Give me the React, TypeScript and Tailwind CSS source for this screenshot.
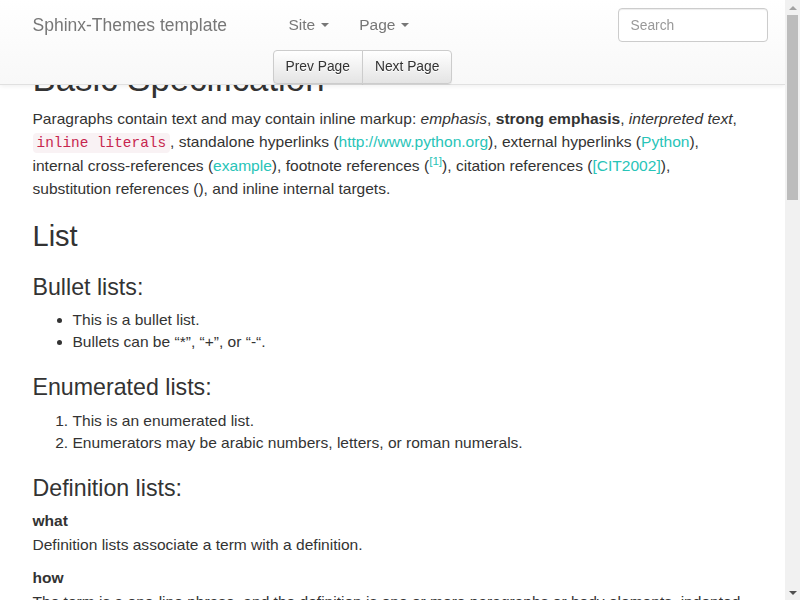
const link = "text-[#28c4b8] no-underline";

function Caret() {
  return (
    <span className="ml-[6px] inline-block h-0 w-0 border-x-[4px] border-t-[4px] border-x-transparent border-t-[#777] align-middle" />
  );
}

function Navbar() {
  return (
    <div className="fixed left-0 right-[15px] top-0 z-10 border-b border-[#e0e0e0] bg-gradient-to-b from-white to-[#f8f8f8] shadow-[0_1px_5px_rgba(0,0,0,0.075)]">
      <div className="mx-auto flex w-[750px] px-[15px]">
        <div className="flex h-[50px] w-[241px] shrink-0 items-center text-[17.5px] leading-[20px] text-[#777]">
          Sphinx-Themes template
        </div>
        <div className="flex flex-col">
          <div className="flex">
            <a className="flex h-[50px] items-center px-[15px] text-[15.5px] text-[#777]">
              Site
              <Caret />
            </a>
            <a className="flex h-[50px] items-center px-[15px] text-[15.5px] text-[#777]">
              Page
              <Caret />
            </a>
          </div>
          <div className="-ml-px flex">
            <button className="h-[34px] rounded-l-[4px] border border-[#ccc] bg-gradient-to-b from-white to-[#e4e4e4] px-[12px] text-[13.8px] leading-[20px] text-[#333] shadow-[0_1px_1px_rgba(0,0,0,0.075)] [text-shadow:0_1px_0_#fff]">
              Prev Page
            </button>
            <button className="-ml-px h-[34px] rounded-r-[4px] border border-[#ccc] bg-gradient-to-b from-white to-[#e4e4e4] px-[12px] text-[13.8px] leading-[20px] text-[#333] shadow-[0_1px_1px_rgba(0,0,0,0.075)] [text-shadow:0_1px_0_#fff]">
              Next Page
            </button>
          </div>
        </div>
        <div className="ml-auto mr-[-15px] pt-[8px]">
          <input
            placeholder="Search"
            className="h-[34px] w-[150px] rounded-[4px] border border-[#ccc] bg-white px-[12px] text-[13.8px] text-[#555] shadow-[inset_0_1px_1px_rgba(0,0,0,0.075)] outline-none placeholder:text-[#999]"
          />
        </div>
      </div>
    </div>
  );
}

// the window scrollbar of the page, drawn since the headless browser hides it
function Scrollbar() {
  return (
    <div className="fixed bottom-0 right-0 top-0 z-20 flex w-[15px] flex-col items-center bg-[#f1f1f1]">
      <div className="flex h-[15px] items-center justify-center">
        <span className="h-0 w-0 border-x-[4px] border-b-[4px] border-x-transparent border-b-[#a3a3a3]" />
      </div>
      <div className="h-[185px] w-[11px] bg-[#bcbcbc]" />
      <div className="flex-1" />
      <div className="flex h-[15px] items-center justify-center">
        <span className="h-0 w-0 border-x-[4px] border-t-[4px] border-x-transparent border-t-[#505050]" />
      </div>
    </div>
  );
}

const h2 = "mt-[20px] mb-[10px] text-[29px] leading-[1.1] font-normal";
const h3 = "mt-[22px] mb-[9px] text-[23.2px] leading-[1.1] font-normal";
const list = "mb-[10px] pl-[40px] leading-[22px]";

export default function App() {
  return (
    <div className="mr-[15px] min-h-[1848px] bg-white font-['Liberation_Sans',Arial,sans-serif] text-[15.55px] leading-[22.86px] text-[#333]">
      <Navbar />
      <Scrollbar />
      <div className="mx-auto w-[750px] px-[15px] pt-[60px]">
        <h1 className="mb-[10px] text-[34.8px] leading-[1.1] font-normal">Basic Specification</h1>
        <p className="mb-[10px]">
          Paragraphs contain text and may contain inline markup: <em>emphasis</em>,{" "}
          <strong>strong emphasis</strong>, <em>interpreted text</em>,{" "}
          <code className="rounded-[4px] bg-[#f9f2f4] px-[4px] py-[2px] font-['Liberation_Mono','Courier_New',monospace] text-[14.4px] text-[#c7254e]">
            inline literals
          </code>
          , standalone hyperlinks (<a className={link}>http://www.python.org</a>), external hyperlinks (
          <a className={link}>Python</a>), internal cross-references (<a className={link}>example</a>), footnote
          references (
          <sup className="relative top-[-0.5em] align-baseline text-[75%] leading-none">
            <a className={link}>[1]</a>
          </sup>
          ), citation references (<a className={link}>[CIT2002]</a>), substitution references (), and inline
          internal targets.
        </p>

        <h2 className={h2}>List</h2>
        <h3 className={h3}>Bullet lists:</h3>
        <ul className={`${list} list-disc`}>
          <li>This is a bullet list.</li>
          <li>Bullets can be “*”, “+”, or “-“.</li>
        </ul>

        <h3 className={h3}>Enumerated lists:</h3>
        <ol className={`${list} list-decimal`}>
          <li>This is an enumerated list.</li>
          <li>Enumerators may be arabic numbers, letters, or roman numerals.</li>
        </ol>

        <h3 className={h3}>Definition lists:</h3>
        <dl className="mb-[20px] leading-[22px]">
          <dt className="font-bold">what</dt>
          <dd>
            <p className="mb-[11px] pt-[2px]">Definition lists associate a term with a definition.</p>
          </dd>
          <dt className="font-bold">how</dt>
          <dd>
            <p className="mb-[11px] pt-[2px]">
              The term is a one-line phrase, and the definition is one or more paragraphs or body elements, indented
              relative to the term. Blank lines are not allowed between term and definition.
            </p>
          </dd>
        </dl>

        <h3 className={h3}>Field lists:</h3>
        <dl className="mb-[20px] leading-[22px]">
          <dt className="font-bold">Authors:</dt>
          <dd>
            <p className="mb-[10px]">Tony J. (Tibs) Ibbs, David Goodger</p>
          </dd>
          <dt className="font-bold">Version:</dt>
          <dd>
            <p className="mb-[10px]">1.0 of 2001/08/08</p>
          </dd>
          <dt className="font-bold">Dedication:</dt>
          <dd>
            <p className="mb-[10px]">To my father.</p>
          </dd>
        </dl>

        <h3 className={h3}>Option lists:</h3>
        <ul className={list}>
          <li>-a command-line option “a”</li>
          <li>-b file options can have arguments and long descriptions</li>
          <li>--long options can be long also</li>
        </ul>

        <h2 className={h2}>Literal Blocks</h2>
        <p className="mb-[10px]">
          Literal blocks are indented, and indicated with a double-colon ending the preceding paragraph:
        </p>
        <pre className="mb-[10px] rounded-[4px] border border-[#ccc] bg-[#f5f5f5] p-[9.5px] font-['Liberation_Mono',monospace] text-[13px] text-[#333]">
          {"if literal_block:\n    text = 'is left as-is'\n    spaces_and_linebreaks = 'are preserved'\n    markup_processing = None"}
        </pre>

        <h2 className={h2}>Block Quotes</h2>
        <blockquote className="mb-[20px] border-l-[5px] border-[#eee] px-[20px] py-[10px] text-[17px]">
          Block quotes consist of indented body elements: My theory by A. Elk. Brackets Ltd, 1972.
        </blockquote>

        <h2 className={h2}>Tables</h2>
        <p className="mb-[10px]">Here’s a grid table followed by a simple table:</p>
      </div>
    </div>
  );
}
